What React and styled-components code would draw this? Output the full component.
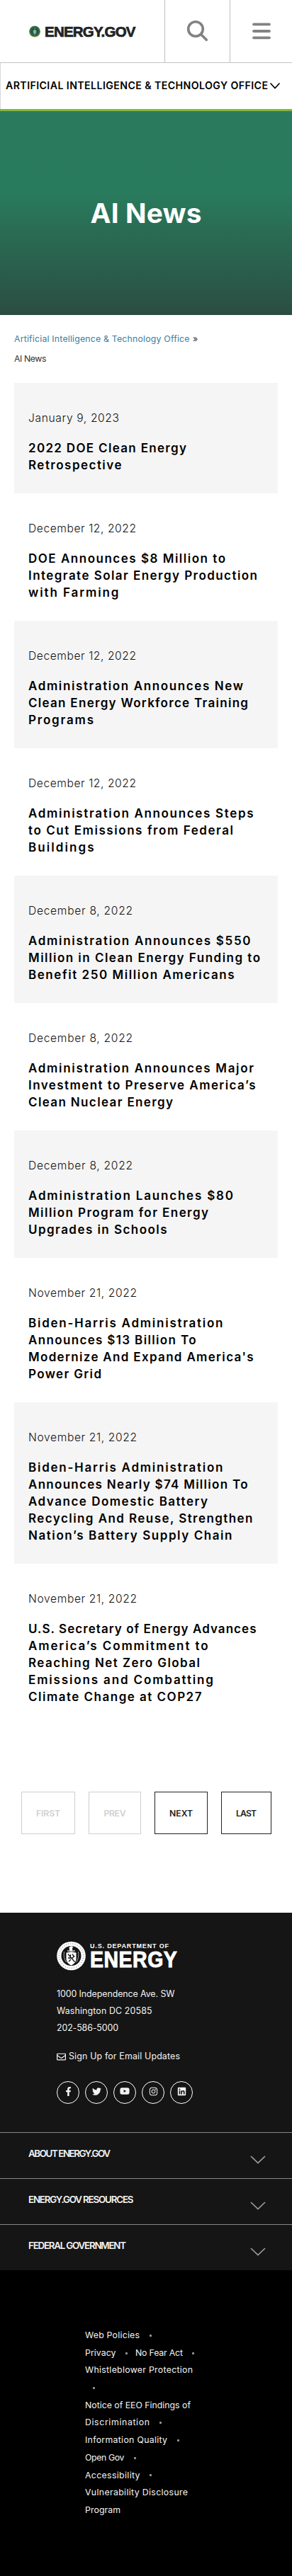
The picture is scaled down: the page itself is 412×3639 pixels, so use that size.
import React, { useLayoutEffect, useRef, useState } from "react";
import styled, { createGlobalStyle } from "styled-components";
import { FaFacebookF, FaTwitter, FaYoutube, FaInstagram, FaLinkedin, FaRegEnvelope } from "react-icons/fa";

const GlobalStyle = createGlobalStyle`
  * { box-sizing: border-box; }
  body { margin: 0; background: #fff; font-family: Inter, Roboto, "Liberation Sans", sans-serif; color: #000; }
  h1, h2, h3, p, ul { margin: 0; padding: 0; font: inherit; }
  ul { list-style: none; }
  a { color: inherit; text-decoration: none; }
  svg { flex-shrink: 0; }
`;

const Fitted = styled.span`
  display: inline-block;
  white-space: nowrap;
`;

/* Tracks a single line of text out (or in) so that it spans a given width. */
function Track({ width, children }) {
  const ref = useRef(null);
  const [spacing, setSpacing] = useState(0);
  useLayoutEffect(() => {
    const natural = parseFloat(getComputedStyle(ref.current).width) - spacing * children.length;
    setSpacing((width - natural) / (children.length - 1));
  }, [width, children]);
  return (
    <Fitted ref={ref} style={{ letterSpacing: `${spacing}px`, marginRight: `${-spacing}px` }}>
      {children}
    </Fitted>
  );
}

const Page = styled.div`
  width: 412px;
  min-height: 3639px;
`;

const TopBar = styled.header`
  display: grid;
  grid-template-columns: 232px 92px 1fr;
  height: 89px;
  border-bottom: 1px solid #c4c4c4;
`;

const Brand = styled.a`
  display: flex;
  align-items: center;
  gap: 6px;
  padding-left: 41px;
  padding-top: 1px;
  font: 700 20.5px/22px "Liberation Sans", Arial, sans-serif;
  color: #222;
  -webkit-text-stroke: 0.7px #222;
`;

const IconButton = styled.button`
  display: flex;
  align-items: center;
  justify-content: center;
  padding: 0;
  border: 0;
  border-left: 1px solid #c0c0c0;
  background: none;
`;

const OfficeBar = styled.nav`
  display: flex;
  height: 65px;
  padding: 0 0 1px 7px;
  border-left: 1px solid #d8d8dc;
  align-items: center;
  gap: 3px;
  font-size: 14.2px;
  font-weight: 600;
  line-height: 24px;
`;

const Hero = styled.section`
  height: 291px;
  padding-top: 120px;
  border-top: 3px solid #80b93a;
  background: linear-gradient(180deg, #2a7b5d 0%, #297b5e 40%, #2a6b52 60%, #2a5b4b 82%, #2b4d42 100%);
  text-align: center;
`;

const HeroTitle = styled.h1`
  font-size: 38.8px;
  font-weight: 650;
  line-height: 48px;
  color: #fff;
`;

const Breadcrumb = styled.nav`
  height: 96px;
  padding: 20px 20px 0;
  font-size: 12.3px;
  line-height: 28px;
  color: #333;
  a { color: #37809f; margin-right: 1px; }
`;

const NewsRow = styled.li`
  margin: 0 20px;
  padding: 38px 20px 28px;
  background: ${(p) => (p.$shaded ? "#f5f5f5" : "#fff")};
`;

const NewsDate = styled.p`
  height: 24px;
  margin-bottom: 18px;
  font-size: 15.6px;
  font-weight: 300;
  line-height: 24px;
  color: #111;
`;

const NewsTitle = styled.h2`
  display: flex;
  flex-direction: column;
  align-items: flex-start;
  font-size: 17px;
  font-weight: 600;
  line-height: 24px;
`;

const Pager = styled.nav`
  display: flex;
  gap: 19px;
  height: 265px;
  padding: 94px 0 0 30px;
`;

const PagerButton = styled.a`
  display: flex;
  align-items: center;
  justify-content: center;
  width: ${(p) => p.$w}px;
  height: 60px;
  border: 1px solid ${(p) => (p.$off ? "#cfcfcf" : "#222")};
  color: ${(p) => (p.$off ? "#d0d0d0" : "#222")};
  font-size: 12.2px;
  font-weight: 600;
`;

const Footer = styled.footer`
  background: #151515;
  color: #f4f4f4;
`;

const FooterInfo = styled.section`
  height: 310px;
  padding: 40px 0 0 80px;
`;

const DoeLogo = styled.div`
  display: flex;
  gap: 6px;
  height: 42px;
`;

const DoeWords = styled.div`
  padding-top: 2px;
  font-family: "Liberation Sans", Arial, sans-serif;
  font-weight: 700;
  color: #fff;
`;

const DoeSmall = styled.div`
  height: 10px;
  font-size: 9px;
  line-height: 10px;
`;

const DoeLarge = styled.div`
  height: 28px;
  font-size: 32px;
  line-height: 28px;
  -webkit-text-stroke: 1px #fff;
  transform: scaleX(0.89);
  transform-origin: 0 0;
`;

const Address = styled.div`
  display: flex;
  flex-direction: column;
  align-items: flex-start;
  margin-top: 21px;
  font-size: 12.4px;
  line-height: 24px;
`;

const EmailLink = styled.a`
  display: flex;
  align-items: center;
  gap: 4px;
  margin-top: 16px;
  font-size: 12.4px;
  line-height: 24px;
`;

const SocialList = styled.ul`
  display: flex;
  gap: 8px;
  margin-top: 23px;
`;

const SocialLink = styled.li`
  display: flex;
  align-items: center;
  justify-content: center;
  width: 32px;
  height: 32px;
  padding-bottom: 4px;
  border: 1px solid #fff;
  border-radius: 50%;
`;

const AccordionRow = styled.div`
  display: flex;
  justify-content: space-between;
  height: 65px;
  padding: 17px 37px 0 40px;
  border-top: 1px solid #868686;
  font-size: 13.3px;
  font-weight: 600;
  line-height: 24px;
  svg { margin-top: 15px; }
`;

const Legal = styled.section`
  height: 432px;
  padding: 80px 0 0 120px;
  background: #000;
  font-size: 12.3px;
  line-height: 24.7px;
`;

const LegalLine = styled.div`
  display: flex;
  align-items: center;
  height: 24.7px;
`;

const Dot = styled.i`
  width: 3px;
  height: 3px;
  margin: 0 ${(p) => (p.$next ? 11 : 0)}px 0 ${(p) => (p.$first ? 10.5 : 13.5)}px;
  border-radius: 1px;
  background: #999;
`;

const articles = [
  ["January 9, 2023", 128, [["2022 DOE Clean Energy", 223], ["Retrospective", 131.5]]],
  ["December 12, 2022", 152, [["DOE Announces $8 Million to", 278], ["Integrate Solar Energy Production", 323], ["with Farming", 127.5]]],
  ["December 12, 2022", 152, [["Administration Announces New", 303], ["Clean Energy Workforce Training", 310], ["Programs", 92]]],
  ["December 12, 2022", 152, [["Administration Announces Steps", 317.5], ["to Cut Emissions from Federal", 289], ["Buildings", 92.5]]],
  ["December 8, 2022", 147, [["Administration Announces $550", 313.5], ["Million in Clean Energy Funding to", 327], ["Benefit 250 Million Americans", 290.5]]],
  ["December 8, 2022", 147, [["Administration Announces Major", 318], ["Investment to Preserve America’s", 320.5], ["Clean Nuclear Energy", 204]]],
  ["December 8, 2022", 147, [["Administration Launches $80", 289], ["Million Program for Energy", 254], ["Upgrades in Schools", 195.5]]],
  ["November 21, 2022", 153, [["Biden-Harris Administration", 274.5], ["Announces $13 Billion To", 236.5], ["Modernize And Expand America's", 317.5], ["Power Grid", 103]]],
  ["November 21, 2022", 153, [["Biden-Harris Administration", 274.5], ["Announces Nearly $74 Million To", 309.5], ["Advance Domestic Battery", 253], ["Recycling And Reuse, Strengthen", 316.5], ["Nation’s Battery Supply Chain", 287.5]]],
  ["November 21, 2022", 153, [["U.S. Secretary of Energy Advances", 321.5], ["America’s Commitment to", 253.5], ["Reaching Net Zero Global", 242], ["Emissions and Combatting", 261], ["Climate Change at COP27", 244.5]]],
];

const legal = [
  [["Web Policies", 77, true]],
  [["Privacy", 43.5, true], ["No Fear Act", 67, true]],
  [["Whistleblower Protection", 152, false]],
  [["", 0, true]],
  [["Notice of EEO Findings of", 149, false]],
  [["Discrimination", 91, true]],
  [["Information Quality", 116, true]],
  [["Open Gov", 55.5, true]],
  [["Accessibility", 77.5, true]],
  [["Vulnerability Disclosure", 145, false]],
  [["Program", 50, false]],
];

const HeaderSeal = () => (
  <svg width="16" height="17" viewBox="0 0 16 17">
    <circle cx="8" cy="8.5" r="8" fill="#a3a050" />
    <circle cx="8" cy="8.2" r="7.4" fill="#2d6b4c" />
    <circle cx="8" cy="8.3" r="4.8" fill="#174e3d" />
    <path d="M5.5 6.5h5v3.3q0 2-2.5 3.2-2.5-1.2-2.5-3.2z" fill="#6fa18a" />
    <path d="M8 3.500v8M6.300 9.500l3-2" stroke="#b9cfae" strokeWidth="0.700" />
  </svg>
);

const FooterSeal = () => (
  <svg width="41" height="42" viewBox="0 0 41 42">
    <circle cx="20.5" cy="21" r="20.3" fill="#fff" />
    <circle cx="20.5" cy="21" r="17.3" fill="none" stroke="#151515" strokeWidth="2" strokeDasharray="0.6 2.6" opacity="0.55" />
    <circle cx="20.5" cy="21" r="14" fill="#151515" />
    <path d="M17.5 9.5q1-2.5 4-2.2l2 1.5-1.5 1 .3 4h-4z" fill="#fff" />
    <path d="M15 14h11" stroke="#fff" strokeWidth="1.2" />
    <path d="M13.5 16.5l7-1.3 7 1.3v9.5q-.5 5-7 8.5-6.5-3.5-7-8.5z" fill="#fff" />
    <path d="M16 18.5l9.5 11M16 24h3.5v-5M22 18.5l3 4M17 29l3-3M21 25l4-4" stroke="#151515" strokeWidth="1.3" fill="none" />
    <path d="M10.5 15q-1.5 9 3 15M30.500 15q1.500 9-3 15" stroke="#fff" strokeWidth="0.6" fill="none" />
  </svg>
);

const social = [[FaFacebookF, 13], [FaTwitter, 13], [FaYoutube, 14], [FaInstagram, 13], [FaLinkedin, 13]];

const sections = [["ABOUT ENERGY.GOV", 116], ["ENERGY.GOV RESOURCES", 148.5], ["FEDERAL GOVERNMENT", 138]];

export default function App() {
  return (
    <Page>
      <GlobalStyle />
      <TopBar>
        <Brand>
          <HeaderSeal />
          <Track width={128.5}>ENERGY.GOV</Track>
        </Brand>
        <IconButton aria-label="Search">
          <svg width="32" height="32" viewBox="0 0 32 32" fill="none" stroke="#828282" strokeWidth="3.6" strokeLinecap="round">
            <circle cx="13" cy="13" r="10.3" />
            <path d="M20.5 20.5L28.3 28.3" />
          </svg>
        </IconButton>
        <IconButton aria-label="Menu">
          <svg width="26" height="24" viewBox="0 0 26 24" stroke="#828282" strokeWidth="3.8" strokeLinecap="round">
            <path d="M2 2.3h22M2 12h22M2 21.3h22" />
          </svg>
        </IconButton>
      </TopBar>
      <OfficeBar>
        <Track width={370}>ARTIFICIAL INTELLIGENCE &amp; TECHNOLOGY OFFICE</Track>
        <svg width="14" height="9" viewBox="0 0 14 9" fill="none" stroke="#000" strokeWidth="1.7" strokeLinecap="round">
          <path d="M1 1l6 6.5 6-6.5" />
        </svg>
      </OfficeBar>
      <Hero>
        <HeroTitle><Track width={157}>AI News</Track></HeroTitle>
      </Hero>
      <Breadcrumb>
        <div>
          <a href="#"><Track width={247.5}>Artificial Intelligence &amp; Technology Office</Track></a> »
        </div>
        <div><Track width={45.5}>AI News</Track></div>
      </Breadcrumb>
      <ul>
        {articles.map(([date, dateWidth, lines], i) => (
          <NewsRow key={i} $shaded={i % 2 === 0}>
            <NewsDate><Track width={dateWidth}>{date}</Track></NewsDate>
            <NewsTitle>
              {lines.map(([text, width]) => <Track key={text} width={width}>{text}</Track>)}
            </NewsTitle>
          </NewsRow>
        ))}
      </ul>
      <Pager>
        <PagerButton $w={76} $off><Track width={34}>FIRST</Track></PagerButton>
        <PagerButton $w={74} $off><Track width={31}>PREV</Track></PagerButton>
        <PagerButton $w={75}><Track width={33}>NEXT</Track></PagerButton>
        <PagerButton $w={71}><Track width={29}>LAST</Track></PagerButton>
      </Pager>
      <Footer>
        <FooterInfo>
          <DoeLogo>
            <FooterSeal />
            <DoeWords>
              <DoeSmall><Track width={111}>U.S. DEPARTMENT OF</Track></DoeSmall>
              <DoeLarge><Track width={138}>ENERGY</Track></DoeLarge>
            </DoeWords>
          </DoeLogo>
          <Address>
            <Track width={166.5}>1000 Independence Ave. SW</Track>
            <Track width={134.5}>Washington DC 20585</Track>
            <Track width={87}>202-586-5000</Track>
          </Address>
          <EmailLink>
            <FaRegEnvelope size={13} />
            <Track width={157}>Sign Up for Email Updates</Track>
          </EmailLink>
          <SocialList>
            {social.map(([Icon, size], i) => <SocialLink key={i}><Icon size={size} /></SocialLink>)}
          </SocialList>
        </FooterInfo>
        {sections.map(([text, width]) => (
          <AccordionRow key={text}>
            <Track width={width}>{text}</Track>
            <svg width="22" height="12" viewBox="0 0 22 12" fill="none" stroke="#9a9a9a" strokeWidth="1.7">
              <path d="M1 1l10 9.5 10-9.5" />
            </svg>
          </AccordionRow>
        ))}
        <Legal>
          {legal.map((line, i) => (
            <LegalLine key={i}>
              {line.map(([text, width, dot]) => (
                <React.Fragment key={text}>
                  {text && <Track width={width}>{text}</Track>}
                  {dot && <Dot $next={line.length > 1} $first={!text} />}
                </React.Fragment>
              ))}
            </LegalLine>
          ))}
        </Legal>
      </Footer>
    </Page>
  );
}
